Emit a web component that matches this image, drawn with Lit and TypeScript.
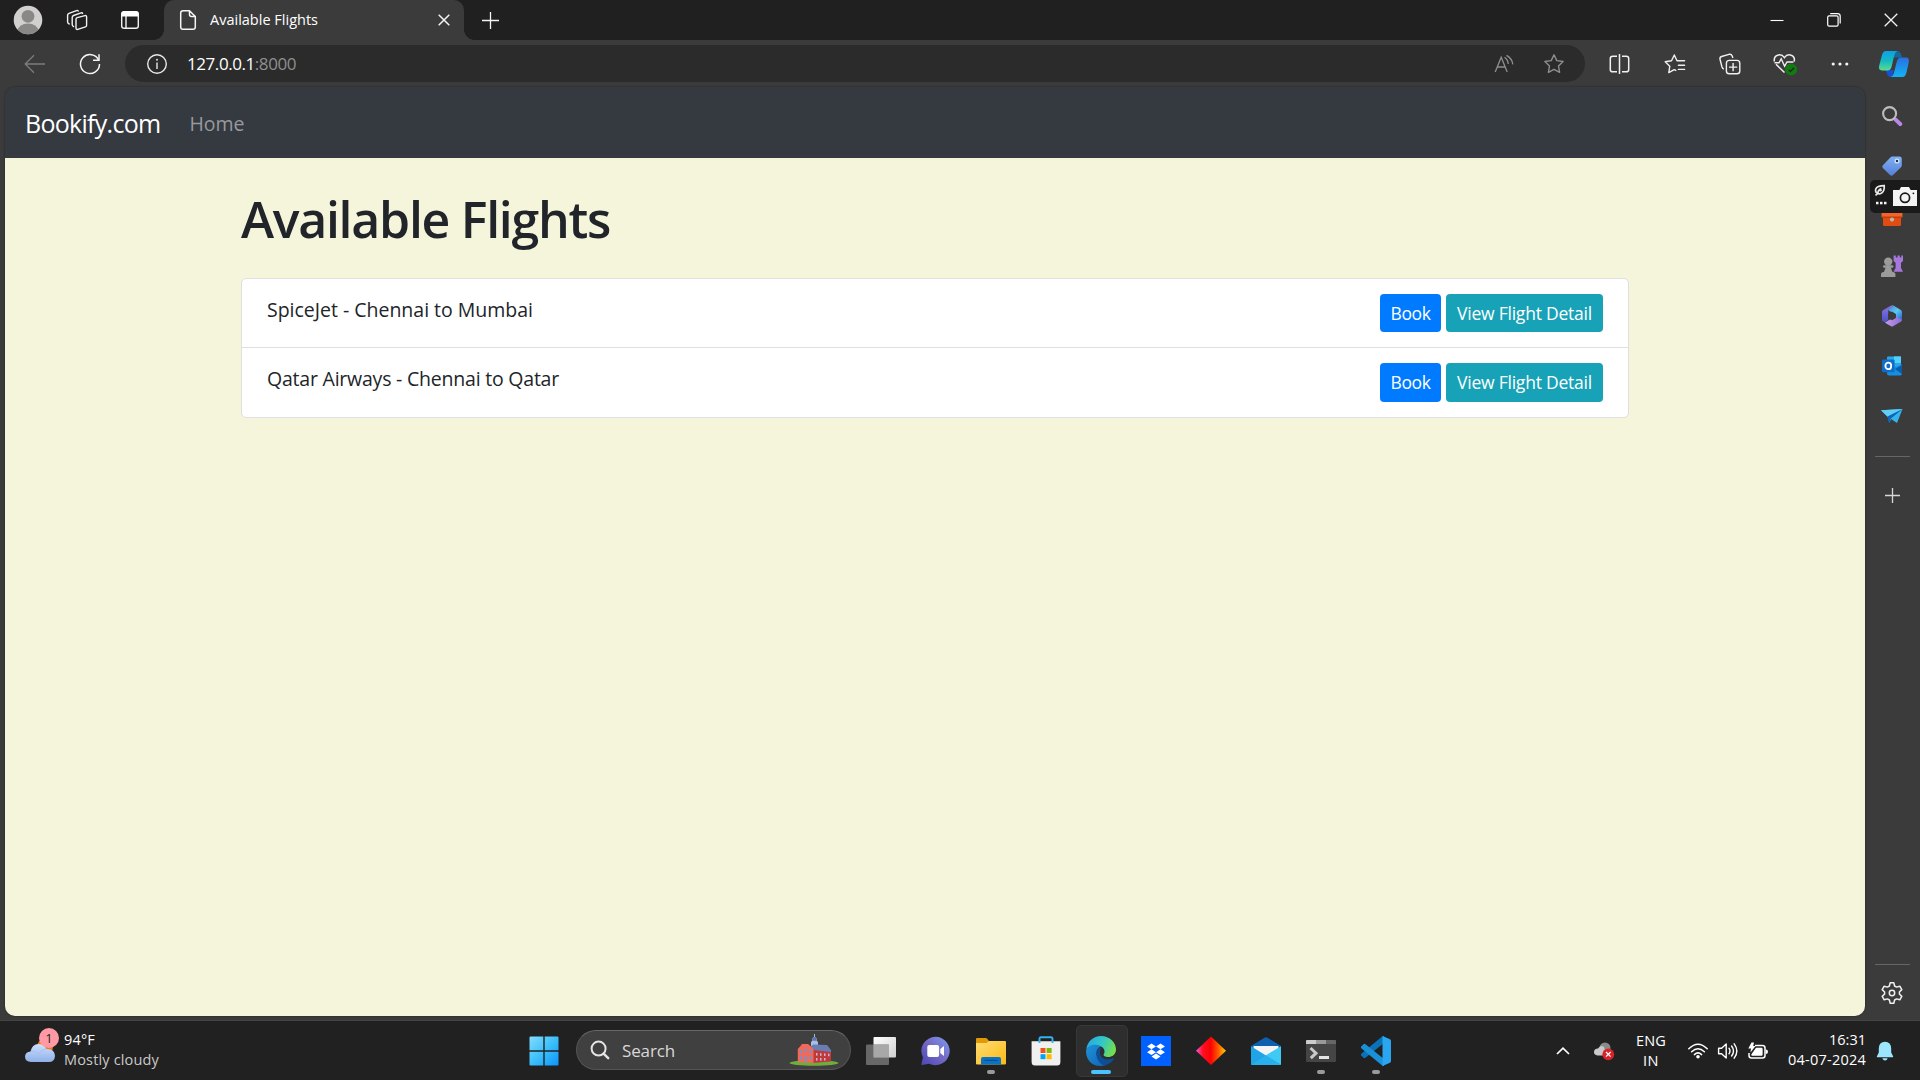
import { LitElement, html, svg, css, TemplateResult } from "lit";
import { customElement, property } from "lit/decorators.js";

/** Text that is tracked to occupy a given advance width. */
@customElement("fit-text")
class FitText extends LitElement {
  @property({ type: Number }) w = 0;
  @property() text = "";
  @property() dim = "";
  static styles = css`
    :host { display: inline-block; white-space: pre; }
    .run { display: inline-block; }
    .dim { color: #8f8f8f; }
  `;
  render() {
    return html`<span class="run">${this.text}${this.dim ? html`<span class="dim">${this.dim}</span>` : ""}</span>`;
  }
  firstUpdated() {
    this.fit();
    document.fonts.ready.then(() => this.fit());
  }
  fit() {
    const run = this.renderRoot.querySelector(".run") as HTMLElement;
    run.style.letterSpacing = "0px";
    const n = (this.text + this.dim).length;
    const natural = run.getBoundingClientRect().width;
    run.style.letterSpacing = `${(this.w - natural) / n}px`;
  }
}

const icon = (w: number, h: number, body: TemplateResult) =>
  html`<svg class="ic" width=${w} height=${h} viewBox="0 0 ${w} ${h}">${body}</svg>`;

const avatar = icon(30, 30, svg`
  <defs><clipPath id="av"><circle cx="15" cy="15" r="14.3"/></clipPath></defs>
  <circle cx="15" cy="15" r="14.3" fill="#d2d0ce"/>
  <g clip-path="url(#av)" fill="#8a8886"><circle cx="15" cy="11.3" r="6.4"/><ellipse cx="15" cy="26" rx="10.5" ry="7.4"/></g>`);

const workspaces = icon(24, 24, svg`<g fill="none" stroke="#f2f2f2" stroke-width="1.4" stroke-linejoin="round" stroke-linecap="round">
  <path d="M11 11.2 Q11 10 12.2 9.6 L20 7.6 Q21.6 7.3 21.6 8.8 V17.2 Q21.6 18.4 20.4 18.9 L12.8 21.4 Q11 21.9 11 20 Z"/>
  <path d="M8.6 18.6 Q7.2 18 7.2 16.6 V9.4 Q7.2 8 8.6 7.5 L16 4.9 Q17.3 4.6 17.6 5.4"/>
  <path d="M4.2 16 Q2.6 15.4 2.6 14 V7.3 Q2.6 6 4 5.4 L11.5 2.6 Q12.8 2.2 13.2 3"/></g>`);

const tabActions = icon(20, 20, svg`<rect x="1.7" y="1.7" width="16.6" height="16.6" rx="2.6" fill="none" stroke="#f2f2f2" stroke-width="1.4"/>
  <path d="M1.5 6.6V4Q1.5 1.2 4 1.2H16Q18.5 1.2 18.5 4V6.6Z" fill="#fff"/><path d="M6 6V18" stroke="#f2f2f2" stroke-width="1.4"/>`);

const pageIcon = icon(18, 22, svg`<path d="M4 1.7H10.5L16.3 7.5V18Q16.3 20.3 14 20.3H4Q1.7 20.3 1.7 18V4Q1.7 1.7 4 1.7Z M10.5 1.9V5.5Q10.5 7.5 12.5 7.5H16" fill="none" stroke="#f5f5f5" stroke-width="1.5" stroke-linejoin="round"/>`);

const cross = (s: number, k: number) => icon(s, s, svg`<path d=${`M.7 .7L${s - 0.7} ${s - 0.7}M${s - 0.7} .7L.7 ${s - 0.7}`} stroke="#f4f4f4" stroke-width=${k} />`);
const plus = (s: number, c: string) => icon(s, s, svg`<path d=${`M${s / 2} 0V${s}M0 ${s / 2}H${s}`} stroke=${c} stroke-width="1.3"/>`);

const minimise = icon(14, 3, svg`<path d="M.5 1.5H13.5" stroke="#fff" stroke-width="1.1"/>`);
const restore = icon(14, 14, svg`<g fill="none" stroke="#fff" stroke-width="1.2"><rect x=".7" y="2.8" width="10.4" height="10.4" rx="1.4"/><path d="M3.2 .7H10.6Q13.2 .7 13.2 3.2V10.6"/></g>`);

const back = icon(22, 20, svg`<path d="M21 10H1.4M10 1.2L1.2 10L10 18.8" fill="none" stroke="#7c7c7c" stroke-width="1.3"/>`);
const refresh = icon(24, 24, svg`<path d="M20.6 8A9.5 9.5 0 1 0 21.5 12" fill="none" stroke="#f4f4f4" stroke-width="1.5"/><path d="M21 2.2V8.3H15" fill="none" stroke="#f4f4f4" stroke-width="1.5"/>`);
const info = icon(22, 22, svg`<circle cx="11" cy="11" r="9.3" fill="none" stroke="#e8e8e8" stroke-width="1.4"/><path d="M11 9.6V16" stroke="#e8e8e8" stroke-width="1.4"/><circle cx="11" cy="6.8" r=".95" fill="#e8e8e8"/>`);
const readAloud = icon(22, 22, svg`<g fill="none" stroke="#8e8e8e" stroke-width="1.3"><path d="M2.2 19L8.2 4.3L14.2 19M4.4 14H12"/><path d="M11.5 4.2Q15 6.5 15.2 11"/><path d="M13.5 2.4Q19.3 5.6 19.8 11.4"/></g>`);

const starPath = "M11 1.8L13.8 7.6L20.1 8.5L15.5 13L16.6 19.3L11 16.3L5.4 19.3L6.5 13L1.9 8.5L8.2 7.6Z";
const star = icon(22, 22, svg`<path d=${starPath} fill="none" stroke="#8e8e8e" stroke-width="1.4" stroke-linejoin="round"/>`);
const split = icon(22, 22, svg`<g fill="none" stroke="#f0f0f0" stroke-width="1.5"><path d="M8 3.2H3.7Q1.3 3.2 1.3 5.6V16.4Q1.3 18.8 3.7 18.8H8M13 3.2H17.3Q19.7 3.2 19.7 5.6V16.4Q19.7 18.8 17.3 18.8H13M10.500 1V21"/></g>`);
const favorites = icon(24, 22, svg`<g fill="none" stroke="#f0f0f0" stroke-width="1.4" stroke-linejoin="round" stroke-linecap="round"><path d="M12.8 17.4L11.2 16.6L5.8 19.6L6.8 13.2L2.2 8.7L8.5 7.8L11.3 2L14 7.8H21.6"/><path d="M15.4 12.2H21.6M15.4 16.4H21.6"/></g>`);
const collections = icon(24, 24, svg`<g fill="none" stroke="#f0f0f0" stroke-width="1.4"><rect x="8.4" y="8.4" width="13.4" height="13.4" rx="2.8"/><path d="M15.1 11V19.2M11 15.1H19.2"/><path d="M5.8 17.2Q4.5 16.6 4 15L2 7.3Q1.6 5.2 3.6 4.5L11 2.3Q13.3 1.7 14.2 4L14.9 6"/></g>`);
const health = icon(26, 24, svg`<path d="M12.5 20.5L4 12.3M2.4 9.5C1.2 2.5 9 .9 12.4 5.6C15.8 .9 23.6 2.5 22.2 9.5" fill="none" stroke="#f0f0f0" stroke-width="1.5"/>
  <path d="M2.5 10.8H7L9.2 6.8L12.6 14.3L15 10H21.5" fill="none" stroke="#f0f0f0" stroke-width="1.4"/>
  <circle cx="19.2" cy="17.5" r="5.9" fill="#107c10"/><path d="M16.6 17.8L18.4 19.5L22 15.8" fill="none" stroke="#262626" stroke-width="1.3"/>`);
const dots = icon(18, 4, svg`<g fill="#f4f4f4"><circle cx="2.2" cy="2" r="1.6"/><circle cx="9" cy="2" r="1.6"/><circle cx="15.8" cy="2" r="1.6"/></g>`);

const copilot = icon(32, 28, svg`<defs>
  <linearGradient id="c1" x1="0" y1="0" x2="0" y2="1"><stop offset="0" stop-color="#0fa0e6"/><stop offset=".5" stop-color="#13b8c4"/><stop offset="1" stop-color="#5bdc8e"/></linearGradient>
  <linearGradient id="c2" x1="0" y1="0" x2="0" y2="1"><stop offset="0" stop-color="#2a6fe0"/><stop offset="1" stop-color="#12b5f5"/></linearGradient></defs>
  <path d="M15 1H19.5Q22 1 22.8 3.5L24 7.5H16Z" fill="#12699c"/>
  <path d="M7.5 20H16L14 27H12Q9.8 27 9 24Z" fill="#1b4fd0"/>
  <path d="M8 1H19.5Q17.4 1.6 16.4 5L13.5 17Q12.6 20.4 9.6 20.4H4Q.2 20.4 1.2 15.5L4 5Q5 1 8 1Z" fill="url(#c1)"/>
  <path d="M24.4 27H12.5Q15 26.4 16 22.8L18.8 11.5Q19.8 7.6 23 7.6H28Q31.6 7.8 30.8 12.2L28.4 22.8Q27.3 27 24.4 27Z" fill="url(#c2)"/>`);

const sideSearch = icon(22, 22, svg`<path d="M14.6 14.6L19.2 19" stroke="#b987e6" stroke-width="4" stroke-linecap="round"/><circle cx="8.6" cy="8.6" r="6.5" fill="none" stroke="#bdbdbd" stroke-width="2.1"/>`);
const tag = icon(22, 22, svg`<defs><linearGradient id="tg" x1="0" y1="0" x2="0" y2="1"><stop offset="0" stop-color="#7fb0f2"/><stop offset="1" stop-color="#5580d8"/></linearGradient></defs>
  <path d="M11.2 1.5H18.5Q20.8 1.5 20.8 3.8V10.5Q20.8 11.5 20 12.3L12 20Q10.5 21.4 9 20L1.8 13Q.6 11.6 1.9 10.3L9.6 2.2Q10.2 1.5 11.2 1.5Z" fill="url(#tg)"/><circle cx="16" cy="6" r="1.9" fill="#26354d" stroke="#dce8ff" stroke-width="1.2"/>`);
const toolbox = icon(22, 22, svg`<rect x="7" y="1" width="8" height="6" rx="2" fill="none" stroke="#c43b10" stroke-width="2"/><rect x=".6" y="4" width="20.8" height="9" rx="1.5" fill="#f2652a"/><path d="M2 13H20V19.5Q20 21 18.5 21H3.5Q2 21 2 19.5Z" fill="#e04c12"/><path d="M1 12.2H21" stroke="#b83205" stroke-width="1.2"/><circle cx="11" cy="14.6" r="2.1" fill="#bdb5b0"/>`);
const games = icon(24, 24, svg`<path d="M13.6 1.5H15.8V3.5H17.5V1.5H19.8V3.5H21.3V1.5H23V7L21 8.7V14L23 17.8H13.6L15.6 14V8.7L13.6 7Z" fill="#a678dd"/>
  <g fill="#9b9b9b"><circle cx="8.2" cy="7.6" r="4.2"/><rect x="3" y="11.2" width="10.4" height="2.6" rx="1.2"/><path d="M5.8 13H10.6L12.6 18.5H3.8Z"/><path d="M1 23V20.5Q1 18 3.6 18H12.8Q15.4 18 15.4 20.5V23Z"/></g>`);
const m365 = icon(22, 22, svg`<defs>
  <linearGradient id="m1" x1="0" y1="0" x2="0" y2="1"><stop offset="0" stop-color="#8f74e6"/><stop offset="1" stop-color="#4653c4"/></linearGradient>
  <linearGradient id="m2" x1="0" y1="0" x2="1" y2="1"><stop offset="0" stop-color="#3f8fe0"/><stop offset=".5" stop-color="#5cc8f4"/><stop offset="1" stop-color="#2c5fc8"/></linearGradient>
  <linearGradient id="m3" x1="0" y1="0" x2="1" y2="0"><stop offset="0" stop-color="#c79be6"/><stop offset="1" stop-color="#8a6ad8"/></linearGradient></defs>
  <path d="M12.500 .6L19.800 5Q21 5.700 21 7V14.800L15 13V9.600L8.500 6L7.800 4.600Z" fill="url(#m2)"/>
  <path d="M12.500 .5L8.200 4.200Q7.200 5.200 7.200 7V14.600L4.600 17.600L2 16.600Q1 16 1 14.800V7.200Q1 6 2 5.300L9.800 .8Q11 .1 12.500 .5Z" fill="url(#m1)"/>
  <path d="M4 17.700L8 15L14.800 11.800L21 14.400Q21 16 19.800 16.700L12 21.200Q11 21.800 10 21.200Z" fill="url(#m3)"/>
  <path d="M11 6.600L14.900 9V13L11 15.300L7.200 13V9Z" fill="#3b3b3b"/>`);
const outlook = icon(22, 22, svg`<rect x="6" y="1.4" width="14" height="13" rx="1" fill="#28a8ea"/><path d="M13 1.4H20V8H13Z" fill="#50d0fa"/><path d="M6 14.5L21 9.5V18.5Q21 20.4 19 20.4H8Q6 20.4 6 18.5Z" fill="#1490df"/><path d="M14 14L21 10V19Z" fill="#0a5ca8"/><rect x="1" y="4.6" width="12.6" height="12.6" rx="1.2" fill="#0f6cc8"/><ellipse cx="7.3" cy="10.9" rx="2.900" ry="3.300" fill="none" stroke="#fff" stroke-width="1.8"/>`);
const plane = icon(24, 18, svg`<path d="M1 3.2L22.5 2L17 16L11 12L9.5 15.8L7.5 9.5Z" fill="#35b4ec"/><path d="M1 3.2L22.5 2L7.6 9.8Z" fill="#62cdf5"/><path d="M7.5 9.5L22.5 2L10.6 11.8L9 16.2Z" fill="#0d64b8"/>`);
const gear = icon(24, 24, svg`<path d="M10.2 1.8H13.8L14.6 5L16.6 6.1L19.8 5.2L21.8 8.6L19.4 11V13L21.8 15.4L19.8 18.8L16.6 17.9L14.6 19L13.8 22.2H10.2L9.4 19L7.4 17.9L4.2 18.8L2.2 15.4L4.6 13V11L2.2 8.6L4.2 5.2L7.4 6.1L9.4 5Z" fill="none" stroke="#f0f0f0" stroke-width="1.5" stroke-linejoin="round"/><circle cx="12" cy="12" r="2.7" fill="none" stroke="#f0f0f0" stroke-width="1.5"/>`);
const capture = icon(50, 33, svg`<g fill="none" stroke="#e8e8e8" stroke-width="1.700"><path d="M8 13.500Q4.800 12.500 5.800 9Q7 5.600 14.200 5.600Q14.600 10.500 12.200 12.600Q10.200 14.400 8 13.500Q7.600 10 11.400 8.600"/><path d="M5.500 15.400L8.200 13.200"/></g><circle cx="10.400" cy="10.200" r="1.300" fill="#e8e8e8"/><g fill="#f4f4f4"><rect x="6" y="21.8" width="2.5" height="2.5"/><rect x="10" y="21.8" width="2.5" height="2.5"/><rect x="14" y="21.8" width="2.5" height="2.5"/><path d="M23 10H29.4L31 7H39L40.6 10H47V26H23Z"/></g><circle cx="35" cy="17.8" r="4.6" fill="none" stroke="#1a1a1a" stroke-width="1.7"/><circle cx="43.4" cy="13.3" r=".9" fill="#1a1a1a"/>`);

const weather = icon(32, 34, svg`<defs><linearGradient id="cl" x1="0" y1="0" x2="0" y2="1"><stop offset="0" stop-color="#cfe0fb"/><stop offset="1" stop-color="#8fb0ea"/></linearGradient></defs>
  <circle cx="21" cy="17" r="8" fill="#f0781c"/>
  <path d="M7 32Q1 31.600 1 26.500Q1.300 22 6.500 21.600Q8 14 14.500 14Q20 14 22.500 19Q30.500 18.500 31 26Q30.500 32 25 32Z" fill="url(#cl)"/><path d="M7 21.600Q12 20.600 15 24.500Q17 19.600 22 19.200" fill="none" stroke="#a9c3f0" stroke-width="1.200"/>`);

const start = icon(30, 30, svg`<defs><linearGradient id="wn" x1="0" y1="0" x2="1" y2="1" ><stop offset="0" stop-color="#84dcfc"/><stop offset=".5" stop-color="#3cc0fb"/><stop offset="1" stop-color="#0c94fa"/></linearGradient></defs>
  <path d="M.5 1.5Q.5 .5 1.500 .5H14.300V14.300H.5ZM15.700 .5H28.500Q29.500 .5 29.500 1.500V14.300H15.700ZM.5 15.700H14.300V29.500H1.500Q.5 29.500 .5 28.500ZM15.700 15.700H29.500V28.500Q29.500 29.500 28.500 29.500H15.700Z" fill="url(#wn)"/>`);
const glass = icon(20, 20, svg`<circle cx="8.600" cy="8.600" r="7" fill="none" stroke="#e4e4e4" stroke-width="2"/><path d="M13.600 13.600L18.200 18.200" stroke="#e4e4e4" stroke-width="2.400" stroke-linecap="round"/>`);
const building = icon(50, 32, svg`<ellipse cx="25" cy="29" rx="24.500" ry="2.800" fill="#6fae3c"/>
  <path d="M25.500 5V0" stroke="#b9c6e6" stroke-width=".9"/><path d="M22 12V8L23 7Q23 3 25.500 3Q28 3 28 7L29 8V12Z" fill="#a9bce6"/><path d="M23.200 6.800Q23.200 3 25.500 3Q27.800 3 27.800 6.800Z" fill="#5b74b0"/>
  <path d="M21 13.500L24 10.500L38 11L42 16V18H22Z" fill="#6a7db2"/><path d="M24 16L42 18V27.500L24 29Z" fill="#c03a3c"/>
  <path d="M8.800 15L11.500 12L13 10H19L22 12.500L24.500 15.500V29L8.800 28Z" fill="#f0695a"/>
  <g fill="#7f8fc0"><rect x="11" y="16" width="2" height="3.400"/><rect x="15.800" y="14.500" width="2" height="4"/><rect x="20.500" y="16" width="2" height="3.400"/><rect x="11" y="22" width="2" height="3.600"/><rect x="15.800" y="22" width="2.200" height="6"/><rect x="20.500" y="22" width="2" height="3.600"/></g>
  <g fill="#c9b4d8"><rect x="27" y="19" width="1.500" height="2.600"/><rect x="31" y="19.200" width="1.500" height="2.600"/><rect x="35" y="19.400" width="1.500" height="2.600"/><rect x="39" y="19.600" width="1.500" height="2.600"/><rect x="27" y="24" width="1.500" height="2.600"/><rect x="31" y="24" width="1.500" height="2.600"/><rect x="35" y="24" width="1.500" height="2.600"/></g>`);
const taskView = icon(30, 30, svg`<defs><linearGradient id="tv" x1="0" y1="0" x2="1" y2="1"><stop offset="0" stop-color="#fff"/><stop offset="1" stop-color="#cfcfcf"/></linearGradient></defs><rect x="7.500" y="1" width="22.500" height="20.500" rx="1" fill="url(#tv)"/><rect x="0" y="8.500" width="23" height="20.500" rx="1" fill="#747474" fill-opacity=".85"/><rect x="7.500" y="8.500" width="15.500" height="13" fill="#a8a8a8"/>`);
const chat = icon(30, 30, svg`<defs><linearGradient id="ch" x1="0" y1="1" x2="1" y2="0"><stop offset="0" stop-color="#4b46b4"/><stop offset=".5" stop-color="#7468c4"/><stop offset="1" stop-color="#7d9df0"/></linearGradient></defs><path d="M14.500 .8A14.200 14.200 0 1 1 8.100 27.700L1 29Q.2 29 .4 28L1.900 21.500A14.200 14.200 0 0 1 14.500 .8Z" fill="url(#ch)"/><rect x="6.300" y="9" width="11.800" height="12" rx="2" fill="#fff"/><path d="M19.300 13L23 10V20L19.300 17Z" fill="#fff"/>`);
const folder = icon(30, 28, svg`<defs><linearGradient id="fo" x1="0" y1="0" x2="1" y2="1"><stop offset="0" stop-color="#ffdc72"/><stop offset="1" stop-color="#fbb916"/></linearGradient></defs><path d="M0 10V2Q0 1 1 1H9.500Q10.500 1 11 1.600L13 4V10Z" fill="#e09a08"/><path d="M0 6H10.500L13 4H29Q30 4 30 5V26.500Q30 27.500 29 27.500H1Q0 27.500 0 26.500Z" fill="url(#fo)"/><path d="M5 27.500V22Q5 20 7 20H23Q25 20 25 22V27.500Z" fill="#0c72c4"/><path d="M9 23.400H21" stroke="#064f94" stroke-width="1.400" stroke-linecap="round"/>`);
const store = icon(30, 30, svg`<path d="M8.500 7V2.800Q8.500 1.200 10 1.200H20Q21.500 1.200 21.500 2.800V7" fill="none" stroke="#2fb4f0" stroke-width="1.900"/><path d="M.6 5.200H29.400V26Q29.400 29.600 26 29.600H4Q.6 29.600 .6 26Z" fill="#f0f0f0"/><rect x="9.500" y="12" width="5" height="5" fill="#f25022"/><rect x="15.600" y="12" width="5" height="5" fill="#7fba00"/><rect x="9.500" y="18.200" width="5" height="5" fill="#00a4ef"/><rect x="15.600" y="18.200" width="5" height="5" fill="#ffb900"/><path d="M8.500 7V5M21.500 7V5" stroke="#2fb4f0" stroke-width="1.900"/>`);
const edge = icon(32, 32, svg`<defs><linearGradient id="e1" x1="0" y1=".2" x2="1" y2=".5"><stop offset="0" stop-color="#24a9e8"/><stop offset=".55" stop-color="#35c8c4"/><stop offset="1" stop-color="#74e04a"/></linearGradient>
  <linearGradient id="e2" x1="0" y1="0" x2="1" y2="1"><stop offset="0" stop-color="#1d93dc"/><stop offset="1" stop-color="#1264b4"/></linearGradient></defs>
  <path d="M1.200 15C2 6.500 8.500 1 16 1C25 1 31 7.600 31 14.500C31 19.500 27 22 23 22C19.500 22 18 20.600 18.700 19.300C20.500 17 19.500 12.500 15 11C9 9 3 11 1.200 15Z" fill="url(#e1)"/>
  <path d="M1.100 15.500C3 9.500 11 8 15.800 11.500C12 12.500 10.500 17 12 21.500C13.500 26.500 18 30 20.500 30.300C9 33.500 .4 25.500 1.100 15.500Z" fill="url(#e2)"/>
  <path d="M11.600 18C10.500 23.500 16 30.700 20.500 30.300C24.500 29 27.500 26.500 29 24Q29 22.700 27.800 23.200C21.500 26 15.500 23.500 15 18.200C14.800 15.500 16 13.500 16.600 12.200C13.500 12 12 15 11.600 18Z" fill="#0c4f96"/>`);
const dropbox = icon(30, 30, svg`<rect width="30" height="30" fill="#0061fe"/><path d="M10.500 7.500L15 10.400L10.500 13.300L6 10.400ZM19.500 7.500L24 10.400L19.500 13.300L15 10.400ZM10.500 13.300L15 16.200L10.500 19.100L6 16.200ZM19.500 13.300L24 16.200L19.500 19.100L15 16.200ZM15 17.600L19.500 20.500L15 23.400L10.500 20.500Z" fill="#fff"/>`);
const diamond = icon(30, 30, svg`<defs><linearGradient id="dl" x1="0" x2="1"><stop offset="0" stop-color="#f45ae0"/><stop offset=".45" stop-color="#ff1020"/><stop offset="1" stop-color="#fb0008"/></linearGradient><linearGradient id="dr" x1="0" x2="1"><stop offset="0" stop-color="#fb0400"/><stop offset=".5" stop-color="#ff5c00"/><stop offset="1" stop-color="#ffd000"/></linearGradient></defs><path d="M15 .5V29L0 14.700Z" fill="url(#dl)"/><path d="M14.900 .5V29L30 14.700Z" fill="url(#dr)"/>`);
const mail = icon(30, 30, svg`<path d="M0 10L13.500 1.700Q15 .8 16.500 1.700L30 10V14H0Z" fill="#0d5fb0"/><path d="M2.500 10H27.500V16L15 22L2.500 16Z" fill="#f4f4f4"/><path d="M0 10.300L15 19.500L30 29H1Q0 29 0 28Z" fill="#1fa4e8"/><path d="M30 10.300V29L14.500 19.400Z" fill="#3fcaf6"/><path d="M0 29L15 19.300L30 29Z" fill="#28b0ee"/>`);
const terminal = icon(30, 24, svg`<path d="M1 1H29Q30 1 30 2V22Q30 23 29 23H1Q0 23 0 22V2Q0 1 1 1Z" fill="#454545"/><path d="M0 5V2Q0 1 1 1H10V5Z" fill="#cccccc"/><path d="M10 1H20V5H10Z" fill="#999"/><path d="M20 1H29Q30 1 30 2V5H20Z" fill="#666"/><path d="M4.500 9L10 14.200L4.800 19.200" fill="none" stroke="#c9c9c9" stroke-width="3"/><rect x="13" y="17" width="10" height="3" fill="#e4e4e4"/>`);
const vscode = icon(32, 32, svg`<path d="M1.200 20.500L3.500 22.800Q4.500 23.500 5.500 22.800L24 8V1.200Q22.800 .8 21.800 1.800L1.300 18.800Q.5 19.600 1.200 20.500Z" fill="#0a72b8"/><path d="M1.200 11.500L3.500 9.200Q4.500 8.500 5.500 9.200L24 24V30.800Q22.800 31.200 21.800 30.200L1.300 13.200Q.5 12.400 1.200 11.500Z" fill="#1a90d8"/><path d="M22.500 1L30 4.200Q31 4.700 31 6V26Q31 27.300 30 27.800L22.500 31Z" fill="#2aa6f0"/>`);

const chevron = icon(14, 8, svg`<path d="M1 7L7 1.200L13 7" fill="none" stroke="#fff" stroke-width="1.700"/>`);
const cloudErr = icon(22, 20, svg`<circle cx="12" cy="7" r="5.500" fill="#8a8a8a"/><path d="M4.500 14.500Q.8 14 1 10.800Q1.400 7.600 5 7.600Q7.500 3.500 11 6L13.500 14.500Z" fill="#c9c9c9"/><circle cx="15.300" cy="13.300" r="5.900" fill="#d8222a"/><path d="M13 11L17.600 15.600M17.600 11L13 15.600" stroke="#fff" stroke-width="1.300"/>`);
const wifi = icon(22, 18, svg`<g fill="none" stroke="#fff" stroke-width="1.500" stroke-linecap="round"><path d="M1.800 6.800Q11 -2.200 20.200 6.800"/><path d="M4.600 9.800Q11 3.600 17.400 9.800"/><path d="M7.400 12.600Q11 9.200 14.600 12.600"/></g><circle cx="11" cy="14.700" r="1.800" fill="#fff"/>`);
const speaker = icon(22, 20, svg`<g fill="none" stroke="#fff" stroke-width="1.400" stroke-linejoin="round" stroke-linecap="round"><path d="M1.600 7.200H4.600L9.200 3V17L4.600 12.800H1.600Z"/><path d="M12 7.200Q14 10 12 12.800M14.600 5Q18.400 10 14.600 15M17.200 2.800Q22.500 10 17.200 17.200"/></g>`);
const battery = icon(22, 18, svg`<path d="M8 3.500H15.500Q18 3.500 18 6V13.500Q18 16 15.500 16H4.500Q2 16 2 13.500V11" fill="none" stroke="#fff" stroke-width="1.500"/><path d="M18.800 7.500Q21 7.500 21 9.700Q21 12 18.800 12Z" fill="#fff"/><path d="M9 5.800H14.500Q15.600 5.800 15.600 7V12.500Q15.600 13.700 14.500 13.700H5Q4.300 13.700 4.300 13V12.500Z" fill="#fff"/><path d="M4.500 .5H7L6.200 4H8.500L3.500 10.500L4 6.500H1.300Z" fill="#fff"/>`);
const bell = icon(18, 20, svg`<path d="M9 .8Q15 1.200 15.200 7.200V11.500L17.200 15.500Q17.300 16.200 16.500 16.200H1.500Q.7 16.200 .8 15.500L2.800 11.500V7.200Q3 1.200 9 .8Z" fill="#9be6fd"/><path d="M6.300 17.200H11.700Q11 19.500 9 19.500Q7 19.500 6.300 17.200Z" fill="#9be6fd"/>`);

@customElement("app-root")
class AppRoot extends LitElement {
  static styles = css`
    :host { display: block; width: 1920px; height: 1080px; overflow: hidden; font-family: "Open Sans", "Noto Sans", sans-serif; background: #3b3b3b; color: #fff; }
    * { box-sizing: border-box; }
    .screen { display: grid; grid-template-rows: 40px 47px 933px 60px; height: 1080px; }
    .ic { display: block; flex: none; }
    .row { display: flex; align-items: center; }
    .cell { display: flex; align-items: center; justify-content: center; flex: none; }
    .grow { flex: 1; }
    .w30 { width: 30px; } .w32 { width: 32px; } .w49 { width: 49px; } .w50 { width: 50px; } .w53 { width: 53px; } .w55 { width: 55px; } .w56 { width: 56px; } .w57 { width: 57px; } .w58 { width: 58px; } .w60 { width: 60px; }

    .titlebar { background: #202020; padding-left: 3px; align-items: stretch; }
    .spaces { padding-right: 1px; }
    .tab { width: 300px; margin-left: 6px; padding: 0 14px 0 15px; background: #3b3b3b; border-radius: 10px 10px 0 0; position: relative; }
    .tab::before, .tab::after { content: ""; position: absolute; bottom: 0; width: 10px; height: 10px; }
    .tab::before { left: -10px; background: radial-gradient(circle at 0 0, #202020 9.5px, #3b3b3b 10px); }
    .tab::after { right: -10px; background: radial-gradient(circle at 100% 0, #202020 9.5px, #3b3b3b 10px); }
    .tabname { font-size: 14.5px; line-height: 20px; margin: 0 auto 0 13px; }

    .pill { width: 1460px; height: 37px; margin-left: 5px; border-radius: 19px; background: #2b2b2b; padding: 0 6px 0 2px; flex: none; }
    .nav { margin-left: 10px; }
    .url { font-size: 17px; line-height: 24px; margin-right: auto; }
    .tools { padding-left: 7px; }

    .middle { display: flex; padding: 0 0 4px 5px; }
    .page { width: 1860px; background: linear-gradient(#353940 50px, #f5f5dc 50px); border-radius: 10px; overflow: hidden; color: #212529; box-shadow: 0 0 2px rgba(0,0,0,.5); }
    .navbar { display: flex; align-items: center; height: 71px; background: #353940; padding: 1px 0 0 20px; }
    .brand { font-size: 25px; line-height: 38px; color: #fff; }
    .home { font-size: 19.500px; line-height: 30px; color: #97999d; margin: 2px 0 0 29px; }
    .container { width: 1388px; margin: 31px 0 0 236px; }
    .title { font-size: 50px; line-height: 60px; height: 60px; font-weight: 600; margin: 0 0 29px; }
    .list { border: 1px solid #dfdfdf; border-radius: 5px; background: #fff; }
    .flight { display: flex; align-items: flex-start; justify-content: space-between; height: 69px; padding: 15px 25px 0 25px; border-bottom: 1px solid #dfdfdf; }
    .flight:last-child { border-bottom: none; }
    .route { font-size: 19.500px; line-height: 30px; margin-top: 1px; }
    .actions { display: flex; gap: 5px; }
    .btn { display: flex; justify-content: center; align-items: center; height: 38px; border-radius: 4px; font: inherit; font-size: 17.500px; line-height: 24px; border: none; padding: 0; color: #fff; }
    .flight:last-child .btn { height: 39px; padding-bottom: 2px; }
    .book { width: 61px; background: #007bff; }
    .detail { width: 157px; background: #17a2b8; }

    .sidebar { width: 55px; display: flex; flex-direction: column; align-items: center; position: relative; padding: 4px 1px 0 0; }
    .side { height: 50px; }
    .rule { width: 35px; height: 1px; background: #666; }
    .rule.first { margin-top: 15px; }
    .more { margin-top: 31px; }
    .rule.last { margin-top: auto; }
    .settings { margin: 16px 0 11px; }
    .capture { position: absolute; left: 5px; top: 93px; width: 50px; height: 33px; background: #1a1a1a; border-radius: 5px 0 0 5px; }

    .taskbar { display: flex; background: #212121; border-top: 1px solid #444; }
    .weather { display: flex; width: 529px; padding: 7px 0 0 24px; }
    .wicon { position: relative; width: 32px; height: 40px; padding-top: 2px; margin-right: 8px; }
    .badge { position: absolute; left: 15px; top: 0; width: 20px; height: 20px; border-radius: 50%; background: #ff9aa5; color: #1e1e1e; font-size: 13px; line-height: 20px; text-align: center; }
    .lines { display: flex; flex-direction: column; font-size: 14.500px; line-height: 20px; padding-top: 2px; }
    .soft { color: #c9c9c9; }
    .start { width: 31px; padding-right: 1px; }
    .search { display: flex; align-items: center; width: 275px; height: 40px; margin: 9px 2.500px 0 16px; border-radius: 20px; background: #404040; border: 1px solid #545454; border-top-color: #686868; padding: 0 11px 0 13px; }
    .slabel { font-size: 17px; line-height: 24px; color: #d8d8d8; margin: 1px auto 0 12px; }
    .app { position: relative; width: 55px; display: flex; justify-content: center; align-items: center; }
    .app.active::before { content: ""; position: absolute; left: 2.500px; top: 4px; width: 50px; height: 50px; border-radius: 5px; background: #2e2e2e; border: 1px solid #383838; }
    .app .ic { position: relative; }
    .dot { position: absolute; left: 23.500px; top: 49px; width: 8px; height: 4px; border-radius: 2px; background: #9a9a9a; }
    .dot.on { left: 17.500px; width: 20px; background: #4cc2ff; }
    .tray { display: flex; margin-left: auto; align-items: center; }
    .lang { display: flex; flex-direction: column; align-items: center; font-size: 14.500px; line-height: 20px; width: 32px; margin: 0 16px 0 15px; }
    .clock { display: flex; flex-direction: column; align-items: flex-end; font-size: 14.500px; line-height: 20px; width: 93px; padding-bottom: 2px; }
    .bell { width: 54px; padding-right: 16px; }
  `;

  private flights = [
    { route: "SpiceJet - Chennai to Mumbai", w: 266 },
    { route: "Qatar Airways - Chennai to Qatar", w: 292 },
  ];

  private apps = [
    { i: taskView, s: "" }, { i: chat, s: "" }, { i: folder, s: "run" }, { i: store, s: "" }, { i: edge, s: "on" },
    { i: dropbox, s: "" }, { i: diamond, s: "" }, { i: mail, s: "" }, { i: terminal, s: "run" }, { i: vscode, s: "run" },
  ];

  render() {
    return html`<div class="screen">
      <header class="titlebar row">
        <div class="cell w50">${avatar}</div>
        <div class="cell w49 spaces">${workspaces}</div>
        <div class="cell w56">${tabActions}</div>
        <div class="tab row">${pageIcon}<fit-text class="tabname" w="108" text="Available Flights"></fit-text>${cross(12, 1.5)}</div>
        <div class="cell w53">${plus(17, "#f4f4f4")}</div>
        <div class="grow"></div>
        <div class="cell w56">${minimise}</div>
        <div class="cell w57">${restore}</div>
        <div class="cell w58">${cross(14, 1.3)}</div>
      </header>
      <div class="toolbar row">
        <div class="cell w50 nav">${back}</div>
        <div class="cell w60">${refresh}</div>
        <div class="pill row">
          <div class="cell w60">${info}</div>
          <fit-text class="url" w="109" text="127.0.0.1" dim=":8000"></fit-text>
          <div class="cell w50">${readAloud}</div>
          <div class="cell w50">${star}</div>
        </div>
        <div class="tools row">
          ${[split, favorites, collections, health, dots].map((i) => html`<div class="cell w55">${i}</div>`)}
        </div>
        <div class="cell w53">${copilot}</div>
      </div>
      <div class="middle">
        <main class="page">
          <nav class="navbar">
            <fit-text class="brand" w="135.500" text="Bookify.com"></fit-text>
            <fit-text class="home" w="55" text="Home"></fit-text>
          </nav>
          <div class="container">
            <h1 class="title"><fit-text w="369" text="Available Flights"></fit-text></h1>
            <div class="list">
              ${this.flights.map((f) => html`<div class="flight">
                <fit-text class="route" w=${f.w} text=${f.route}></fit-text>
                <div class="actions">
                  <button class="btn book"><fit-text w="40" text="Book"></fit-text></button>
                  <button class="btn detail"><fit-text w="135" text="View Flight Detail"></fit-text></button>
                </div>
              </div>`)}
            </div>
          </div>
        </main>
        <aside class="sidebar">
          ${[sideSearch, tag, toolbox, games, m365, outlook, plane].map((i) => html`<div class="cell side">${i}</div>`)}
          <div class="rule first"></div>
          <div class="more">${plus(15, "#d8d8d8")}</div>
          <div class="rule last"></div>
          <div class="settings">${gear}</div>
          <div class="capture">${capture}</div>
        </aside>
      </div>
      <footer class="taskbar">
        <div class="weather">
          <div class="wicon">${weather}<span class="badge">1</span></div>
          <div class="lines"><fit-text w="31" text="94°F"></fit-text><fit-text class="soft" w="95" text="Mostly cloudy"></fit-text></div>
        </div>
        <div class="cell start">${start}</div>
        <div class="search">${glass}<fit-text class="slabel" w="53" text="Search"></fit-text>${building}</div>
        ${this.apps.map((a) => html`<div class="app ${a.s === "on" ? "active" : ""}">${a.i}${a.s ? html`<span class="dot ${a.s}"></span>` : ""}</div>`)}
        <div class="tray row">
          <div class="cell w50">${chevron}</div>
          <div class="cell w32">${cloudErr}</div>
          <div class="lang"><fit-text w="30" text="ENG"></fit-text><fit-text w="16" text="IN"></fit-text></div>
          <div class="cell w30">${wifi}</div>
          <div class="cell w30">${speaker}</div>
          <div class="cell w30">${battery}</div>
          <div class="clock"><fit-text w="37" text="16:31"></fit-text><fit-text w="78" text="04-07-2024"></fit-text></div>
          <div class="cell bell">${bell}</div>
        </div>
      </footer>
    </div>`;
  }
}
